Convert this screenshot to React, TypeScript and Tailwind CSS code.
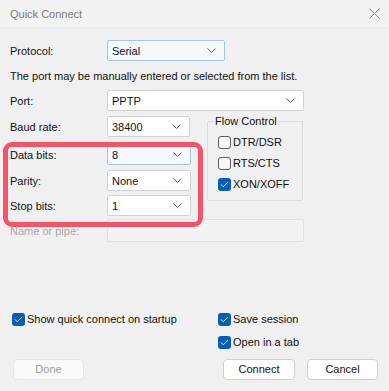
import type { ReactNode } from 'react'

// Quick Connect dialog (Windows 11 style, serial protocol selected)

const FONT = '"Segoe UI", "Liberation Sans", Arial, sans-serif'

function Chevron() {
  return (
    <svg width="9" height="5" viewBox="0 0 9 5" className="shrink-0">
      <polyline points="0.5,0.5 4.5,4.5 8.5,0.5" fill="none" stroke="#606060" strokeWidth="1" />
    </svg>
  )
}

function Combo({ value, width, focused = false }: { value: string; width: string; focused?: boolean }) {
  return (
    <div
      className={`${width} h-[21px] flex items-center justify-between pl-[4px] pr-[8px] border rounded-[2px] text-[11px] text-[#111] ${
        focused ? 'bg-[#f5f9fd] border-[#a6c4e4]' : 'bg-white border-[#d2d2d2]'
      }`}
    >
      <span className="pt-[1px]">{value}</span>
      <Chevron />
    </div>
  )
}

function Row({ label, children, className = '' }: { label: string; children: ReactNode; className?: string }) {
  return (
    <div className={`flex items-center ${className}`}>
      <span className="w-[97px] pt-[1px] text-[11px] text-[#111]">{label}</span>
      {children}
    </div>
  )
}

function CheckBox({ label, checked = false }: { label: string; checked?: boolean }) {
  return (
    <div className="flex items-center h-[16px] gap-[2px]">
      {checked ? (
        <span className="w-[13px] h-[13px] rounded-[3px] bg-[#005fb8] flex items-center justify-center">
          <svg width="9" height="7" viewBox="0 0 9 7">
            <polyline points="1,3.5 3.3,5.8 8,1" fill="none" stroke="#ffffff" strokeWidth="1" />
          </svg>
        </span>
      ) : (
        <span className="w-[13px] h-[13px] rounded-[3px] border border-[#5c5c5c] bg-[#f7f7f7]" />
      )}
      <span className="text-[11px] text-[#111] leading-[16px]">{label}</span>
    </div>
  )
}

export default function App() {
  return (
    <div className="relative w-[389px] h-[391px] bg-[#f0f0f0] overflow-hidden" style={{ fontFamily: FONT }}>
      {/* Title bar */}
      <div className="h-[28px] bg-[#f3f3f3] border-b border-[#ebebeb] flex items-center justify-between pl-[10px] pr-[9px]">
        <span className="pt-[1px] text-[11px] text-[#7a7a7a]">Quick Connect</span>
        <svg width="11" height="11" viewBox="0 0 11 11">
          <path d="M0.5 0.5 L10.5 10.5 M10.5 0.5 L0.5 10.5" stroke="#8a8a8a" strokeWidth="1" />
        </svg>
      </div>

      <div className="pl-[10px]">
        <Row label="Protocol:" className="mt-[12px]">
          <Combo value="Serial" width="w-[118px]" focused />
        </Row>

        <p className="mt-[7px] text-[11px] leading-[16px] text-[#111]">
          The port may be manually entered or selected from the list.
        </p>

        <Row label="Port:" className="mt-[6px]">
          <Combo value="PPTP" width="w-[197px]" />
        </Row>

        <div className="flex mt-[5px]">
          <div className="flex flex-col">
            <Row label="Baud rate:">
              <Combo value="38400" width="w-[83px]" />
            </Row>
            <Row label="Data bits:" className="mt-[7px]">
              <Combo value="8" width="w-[84px]" focused />
            </Row>
            <Row label="Parity:" className="mt-[5px]">
              <Combo value="None" width="w-[84px]" />
            </Row>
            <Row label="Stop bits:" className="mt-[4px]">
              <Combo value="1" width="w-[84px]" />
            </Row>
          </div>

          {/* Flow control group */}
          <div className="relative ml-[16px] mt-[5px] w-[96px] h-[80px] border border-[#dcdcdc] rounded-[2px] pl-[10px] pt-[12px] flex flex-col gap-[5px]">
            <span className="absolute -top-[9px] left-[6px] px-[1px] bg-[#f0f0f0] text-[11px] leading-[16px] text-[#111]">
              Flow Control
            </span>
            <CheckBox label="DTR/DSR" />
            <CheckBox label="RTS/CTS" />
            <CheckBox label="XON/XOFF" checked />
          </div>
        </div>

        <div className="flex items-center mt-[3px]">
          <span className="w-[97px] pt-[1px] text-[11px] text-[#a8a8a8]">Name or pipe:</span>
          <div className="w-[197px] h-[23px] border border-[#e2e2e2] bg-[#f3f3f3] rounded-[2px]" />
        </div>
      </div>

      {/* Options */}
      <div className="flex mt-[69px] pl-[12px]">
        <div className="w-[206px]">
          <CheckBox label="Show quick connect on startup" checked />
        </div>
        <div className="flex flex-col gap-[7px]">
          <CheckBox label="Save session" checked />
          <CheckBox label="Open in a tab" checked />
        </div>
      </div>

      {/* Buttons */}
      <div className="flex mt-[9px] pl-[13px] pr-[11px]">
        <button
          type="button"
          disabled
          className="w-[71px] h-[21px] rounded-[4px] border border-[#e6e6e6] bg-[#f9f9f9] text-[11px] text-[#9c9c9c]"
        >
          Done
        </button>
        <div className="ml-auto flex gap-[12px]">
          <button
            type="button"
            className="w-[72px] h-[21px] rounded-[4px] border border-[#d0d0d0] bg-white text-[11px] text-[#111]"
          >
            Connect
          </button>
          <button
            type="button"
            className="w-[71px] h-[21px] rounded-[4px] border border-[#d0d0d0] bg-white text-[11px] text-[#111]"
          >
            Cancel
          </button>
        </div>
      </div>

      {/* Highlight annotation */}
      <div className="absolute left-[3px] top-[142px] w-[200px] h-[85px] border-[5px] border-[#f4546a] rounded-[9px] pointer-events-none" />
    </div>
  )
}
